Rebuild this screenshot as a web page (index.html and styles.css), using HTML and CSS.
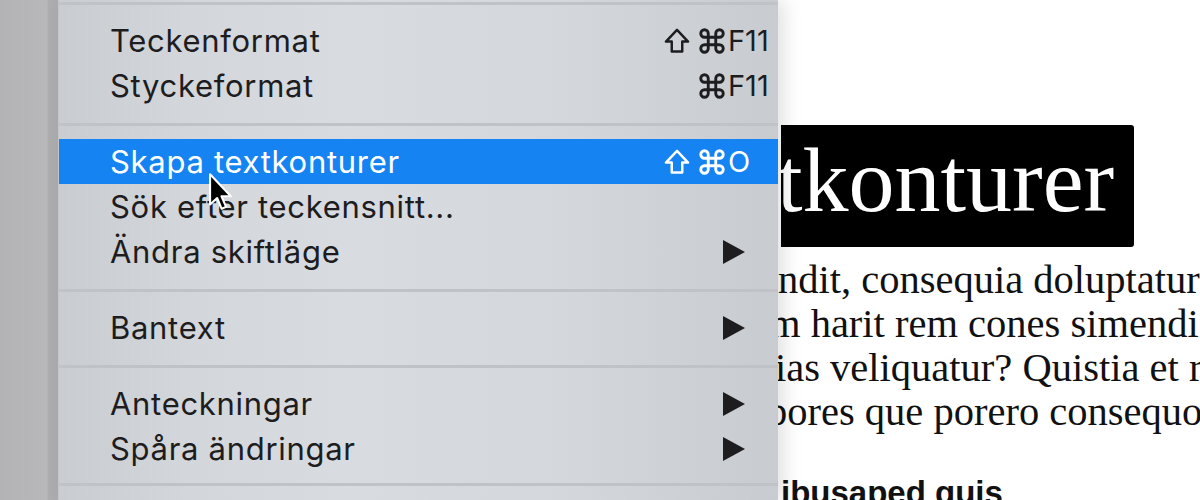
FILE: index.html
```html
<!DOCTYPE html>
<html lang="sv">
<head>
  <meta charset="UTF-8">
  <title>Skapa textkonturer</title>
  <link rel="stylesheet" href="styles.css">
</head>
<body>
  <div class="screen">

    <!-- window edge on the left -->
    <div class="edge"></div>

    <!-- Text menu -->
    <div class="menu">
      <div class="sep top"></div>
      <div class="item">
        <span class="label">Teckenformat</span>
        <span class="keys">
          <span class="mods">
            <svg class="shift" viewBox="0 0 24 24"><path d="M12 2.5 L2.5 12.5 H7.5 V21 H16.5 V12.5 H21.5 Z"/></svg>
            <svg class="cmd" viewBox="0 0 24 24"><path d="M18 3a3 3 0 0 0-3 3v12a3 3 0 0 0 3 3 3 3 0 0 0 3-3 3 3 0 0 0-3-3H6a3 3 0 0 0-3 3 3 3 0 0 0 3 3 3 3 0 0 0 3-3V6a3 3 0 0 0-3-3 3 3 0 0 0-3 3 3 3 0 0 0 3 3h12a3 3 0 0 0 3-3 3 3 0 0 0-3-3z"/></svg>
          </span>
          <span class="key">F11</span>
        </span>
      </div>
      <div class="item">
        <span class="label">Styckeformat</span>
        <span class="keys">
          <span class="mods">
            <svg class="cmd" viewBox="0 0 24 24"><path d="M18 3a3 3 0 0 0-3 3v12a3 3 0 0 0 3 3 3 3 0 0 0 3-3 3 3 0 0 0-3-3H6a3 3 0 0 0-3 3 3 3 0 0 0 3 3 3 3 0 0 0 3-3V6a3 3 0 0 0-3-3 3 3 0 0 0-3 3 3 3 0 0 0 3 3h12a3 3 0 0 0 3-3 3 3 0 0 0-3-3z"/></svg>
          </span>
          <span class="key">F11</span>
        </span>
      </div>
      <div class="sep"></div>
      <div class="item active">
        <span class="label">Skapa textkonturer</span>
        <span class="keys">
          <span class="mods">
            <svg class="shift" viewBox="0 0 24 24"><path d="M12 2.5 L2.5 12.5 H7.5 V21 H16.5 V12.5 H21.5 Z"/></svg>
            <svg class="cmd" viewBox="0 0 24 24"><path d="M18 3a3 3 0 0 0-3 3v12a3 3 0 0 0 3 3 3 3 0 0 0 3-3 3 3 0 0 0-3-3H6a3 3 0 0 0-3 3 3 3 0 0 0 3 3 3 3 0 0 0 3-3V6a3 3 0 0 0-3-3 3 3 0 0 0-3 3 3 3 0 0 0 3 3h12a3 3 0 0 0 3-3 3 3 0 0 0-3-3z"/></svg>
          </span>
          <span class="key">O</span>
        </span>
      </div>
      <div class="item">
        <span class="label">Sök efter teckensnitt...</span>
      </div>
      <div class="item">
        <span class="label">Ändra skiftläge</span>
        <span class="arrow"></span>
      </div>
      <div class="sep"></div>
      <div class="item">
        <span class="label">Bantext</span>
        <span class="arrow"></span>
      </div>
      <div class="sep"></div>
      <div class="item">
        <span class="label">Anteckningar</span>
        <span class="arrow"></span>
      </div>
      <div class="item">
        <span class="label">Spåra ändringar</span>
        <span class="arrow"></span>
      </div>
      <div class="sep bottom"></div>
    </div>

    <!-- Document behind the menu -->
    <div class="doc">
      <div class="heading"><span>tkonturer</span></div>
      <div class="body">
        <div class="line l1">ndit, consequia doluptatur</div>
        <div class="line l2">m harit rem cones simendi</div>
        <div class="line l3">ias veliquatur? Quistia et re</div>
        <div class="line l4">pores que porero consequo</div>
      </div>
      <div class="subhead">ibusaped quis</div>
    </div>

    <!-- mouse pointer -->
    <svg class="cursor" width="27" height="42" viewBox="0 0 13 20">
      <path d="M1 1 L1 15.5 L4.4 12.4 L6.6 17.6 L8.7 16.7 L6.5 11.6 L11 11.6 Z" fill="#000" stroke="#fff" stroke-width="1" stroke-linejoin="round"/>
    </svg>
  </div>
</body>
</html>
```

FILE: styles.css
```css
* { margin: 0; padding: 0; box-sizing: border-box; }

body {
  width: 1200px;
  height: 500px;
  overflow: hidden;
  background: #fff;
}

.screen {
  position: relative;
  display: flex;
  width: 1200px;
  height: 500px;
  overflow: hidden;
}

.edge {
  width: 58px;
  flex: none;
  background: linear-gradient(to right, #b3b3b5 0%, #b8b8ba 80%, #adadaf 84%, #aeaeb0 100%);
}

.menu {
  width: 720px;
  flex: none;
  position: relative;
  z-index: 2;
  background: linear-gradient(to right, #c9ccd0 0%, #d3d6da 18%, #d8dbdf 40%, #d4d7db 70%, #c8cbcf 100%);
  border-left: 1px solid #c4c5c8;
  box-shadow: 6px 0 18px rgba(0, 0, 0, 0.12);
  font-family: Inter, "Liberation Sans", sans-serif;
  font-size: 31px;
  color: #1d1d1f;
}

.sep {
  height: 3px;
  margin: 15px 0 13px;
  background: #bfc2c6;
}
.sep.top { margin-top: 2px; }
.sep.bottom { margin-top: 12px; }

.item {
  display: flex;
  align-items: center;
  height: 45px;
  padding: 0 33px 0 51px;
  line-height: 45px;
  letter-spacing: 0.7px;
}

.item .label { flex: 1; white-space: nowrap; }

.item.active {
  background: #1583f1;
  color: #fff;
}

.keys {
  display: flex;
  align-items: center;
  margin-right: -20px;
}

.mods {
  display: flex;
  justify-content: flex-end;
  align-items: center;
  gap: 6px;
  width: 80px;
}

.mods svg {
  fill: none;
  stroke: currentColor;
  stroke-linejoin: round;
}
.mods .shift { width: 28px; height: 28px; stroke-width: 2.1; }
.mods .cmd { width: 30px; height: 30px; stroke-width: 2.3; }

.key {
  width: 38px;
  padding-left: 1px;
  font-size: 29px;
  letter-spacing: 0;
}

.arrow {
  width: 0;
  height: 0;
  border-top: 12px solid transparent;
  border-bottom: 12px solid transparent;
  border-left: 22px solid #1d1d1f;
}

.doc {
  flex: 1;
  overflow: hidden;
  padding-top: 125px;
  background: #fff;
}

.heading {
  width: 353px;
  height: 122px;
  margin-left: 3px;
  background: #000;
  border-radius: 0 3px 3px 0;
  overflow: hidden;
  font-family: "Liberation Serif", serif;
  font-size: 92px;
  line-height: 122px;
  color: #fff;
  white-space: nowrap;
}
.heading span { display: block; margin-left: -4px; margin-top: -6px; }

.body {
  margin-top: 11px;
  font-family: "Liberation Serif", serif;
  font-size: 40.5px;
  line-height: 44px;
  color: #111;
  white-space: nowrap;
}
.l1 { margin-left: 0; }
.l2 { margin-left: -9px; }
.l3 { margin-left: -3px; }
.l4 { margin-left: -11px; }

.subhead {
  margin-top: 40px;
  margin-left: 3px;
  font-family: "Liberation Sans", sans-serif;
  font-weight: bold;
  font-size: 33px;
  color: #111;
  white-space: nowrap;
}

.cursor {
  position: absolute;
  left: 208px;
  top: 172px;
  z-index: 3;
}
```
